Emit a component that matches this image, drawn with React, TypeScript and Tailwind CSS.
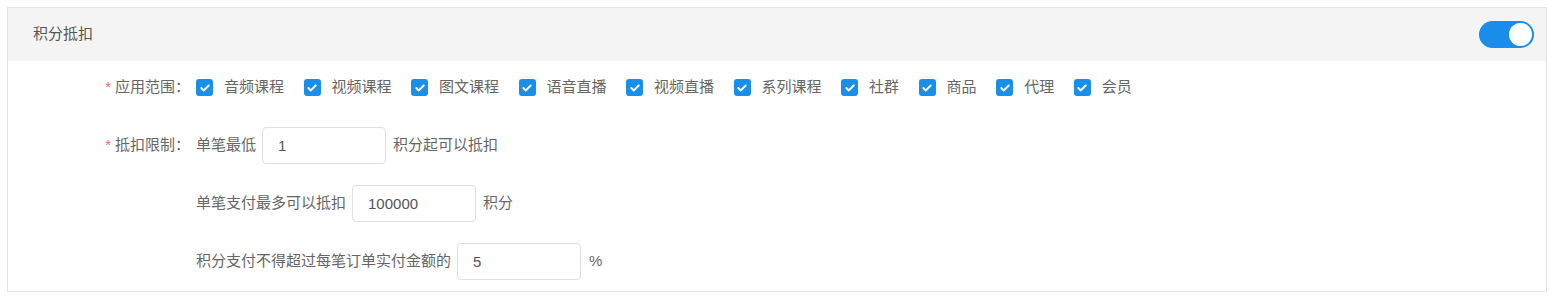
import { useState } from 'react';

const scopes = ['音频课程', '视频课程', '图文课程', '语音直播', '视频直播', '系列课程', '社群', '商品', '代理', '会员'];

const font = { fontFamily: '"Liberation Sans", "Noto Sans CJK SC", sans-serif' };

function Check({ on, onClick }: { on: boolean; onClick: () => void }) {
  return (
    <span
      onClick={onClick}
      className={`flex h-[17px] w-[17px] items-center justify-center rounded-[3px] cursor-pointer ${on ? 'bg-[#1a8fe9]' : 'border border-[#dcdfe6] bg-white'}`}
    >
      {on && (
        <svg width="10" height="8" viewBox="0 0 10 8" fill="none">
          <path d="M1.3 4.1 3.8 6.4 8.7 1.5" stroke="white" strokeWidth="2" strokeLinecap="round" strokeLinejoin="round" />
        </svg>
      )}
    </span>
  );
}

function Label({ text }: { text: string }) {
  return (
    <div className="w-[182px] shrink-0 text-right">
      <span className="mr-[4px] text-[#f56c6c]">*</span>
      {text}
    </div>
  );
}

function Input({ value }: { value: string }) {
  return (
    <input
      defaultValue={value}
      className="h-[37px] w-[124px] rounded-[4px] border border-[#dcdfe6] bg-white pl-[15px] text-[15px] text-[#555] outline-none"
      style={font}
    />
  );
}

export default function App() {
  const [enabled, setEnabled] = useState(true);
  const [checked, setChecked] = useState<boolean[]>(scopes.map(() => true));

  const toggle = (i: number) => setChecked(c => c.map((v, j) => (j === i ? !v : v)));

  return (
    <div className="bg-white p-[7px]" style={font}>
      <div className="w-[1540px] border border-[#e4e4e4] text-[15px] text-[#666]">
        {/* Header */}
        <div className="flex h-[53px] items-center justify-between bg-[#f4f4f4] pl-[25px] pr-[12px]">
          <span className="text-[#555]">积分抵扣</span>
          <button
            onClick={() => setEnabled(!enabled)}
            className={`flex h-[27px] w-[55px] items-center rounded-full p-[2px] ${enabled ? 'justify-end bg-[#1a8ceb]' : 'justify-start bg-[#dcdfe6]'}`}
          >
            <span className="h-[23px] w-[23px] rounded-full bg-white" />
          </button>
        </div>

        {/* Body */}
        <div className="flex flex-col gap-[21px] pt-[8px] pb-[11px]">
          <div className="flex h-[37px] items-center">
            <Label text="应用范围：" />
            <div className="ml-[6px] flex items-center">
              {scopes.map((s, i) => (
                <label key={s} className="mr-[19.5px] flex items-center gap-[11px]">
                  <Check on={checked[i]} onClick={() => toggle(i)} />
                  <span>{s}</span>
                </label>
              ))}
            </div>
          </div>

          <div className="flex h-[37px] items-center">
            <Label text="抵扣限制：" />
            <div className="ml-[6px] flex items-center gap-[6px]">
              <span>单笔最低</span>
              <Input value="1" />
              <span className="ml-[1px]">积分起可以抵扣</span>
            </div>
          </div>

          <div className="flex h-[37px] items-center pl-[188px]">
            <div className="flex items-center gap-[6px]">
              <span>单笔支付最多可以抵扣</span>
              <Input value="100000" />
              <span className="ml-[1px]">积分</span>
            </div>
          </div>

          <div className="flex h-[37px] items-center pl-[188px]">
            <div className="flex items-center gap-[6px]">
              <span>积分支付不得超过每笔订单实付金额的</span>
              <Input value="5" />
              <span className="ml-[2px]">%</span>
            </div>
          </div>
        </div>
      </div>
    </div>
  );
}
